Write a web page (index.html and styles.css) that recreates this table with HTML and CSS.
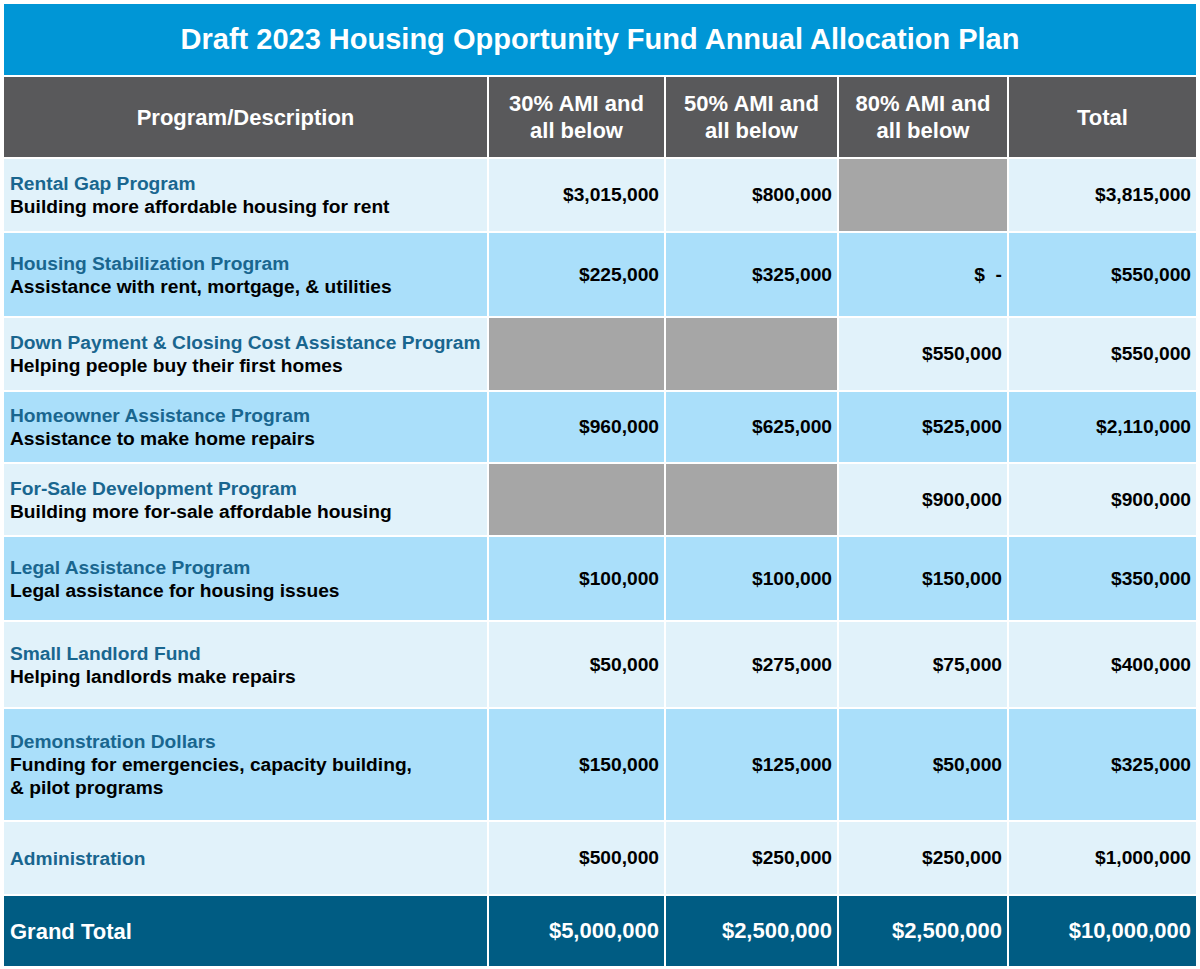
FILE: index.html
```html
<!DOCTYPE html>
<html lang="en">
<head>
    <meta charset="UTF-8">
    <meta name="viewport" content="width=device-width, initial-scale=1.0">
    <title>Draft 2023 Housing Opportunity Fund Annual Allocation Plan</title>
    <link rel="stylesheet" href="styles.css">
</head>
<body>
    <div class="plan">
        <div class="plan-title">Draft 2023 Housing Opportunity Fund Annual Allocation Plan</div>

        <div class="head head-left">Program/Description</div>
        <div class="head">30% AMI and<br>all below</div>
        <div class="head">50% AMI and<br>all below</div>
        <div class="head">80% AMI and<br>all below</div>
        <div class="head">Total</div>

        <!-- rental gap -->
        <div class="prog light"><span class="prog-name">Rental Gap Program</span><span>Building more affordable housing for rent</span></div>
        <div class="amt light">$3,015,000</div>
        <div class="amt light">$800,000</div>
        <div class="amt blank"></div>
        <div class="amt light">$3,815,000</div>

        <!-- housing stabilization -->
        <div class="prog dark"><span class="prog-name">Housing Stabilization Program</span><span>Assistance with rent, mortgage, &amp; utilities</span></div>
        <div class="amt dark">$225,000</div>
        <div class="amt dark">$325,000</div>
        <div class="amt dark">$&nbsp;&nbsp;-</div>
        <div class="amt dark">$550,000</div>

        <!-- down payment -->
        <div class="prog light"><span class="prog-name">Down Payment &amp; Closing Cost Assistance Program</span><span>Helping people buy their first homes</span></div>
        <div class="amt blank"></div>
        <div class="amt blank"></div>
        <div class="amt light">$550,000</div>
        <div class="amt light">$550,000</div>

        <!-- homeowner -->
        <div class="prog dark"><span class="prog-name">Homeowner Assistance Program</span><span>Assistance to make home repairs</span></div>
        <div class="amt dark">$960,000</div>
        <div class="amt dark">$625,000</div>
        <div class="amt dark">$525,000</div>
        <div class="amt dark">$2,110,000</div>

        <!-- for-sale -->
        <div class="prog light"><span class="prog-name">For-Sale Development Program</span><span>Building more for-sale affordable housing</span></div>
        <div class="amt blank"></div>
        <div class="amt blank"></div>
        <div class="amt light">$900,000</div>
        <div class="amt light">$900,000</div>

        <!-- legal -->
        <div class="prog dark"><span class="prog-name">Legal Assistance Program</span><span>Legal assistance for housing issues</span></div>
        <div class="amt dark">$100,000</div>
        <div class="amt dark">$100,000</div>
        <div class="amt dark">$150,000</div>
        <div class="amt dark">$350,000</div>

        <!-- small landlord -->
        <div class="prog light"><span class="prog-name">Small Landlord Fund</span><span>Helping landlords make repairs</span></div>
        <div class="amt light">$50,000</div>
        <div class="amt light">$275,000</div>
        <div class="amt light">$75,000</div>
        <div class="amt light">$400,000</div>

        <!-- demonstration -->
        <div class="prog dark"><span class="prog-name">Demonstration Dollars</span><span>Funding for emergencies, capacity building,<br>&amp; pilot programs</span></div>
        <div class="amt dark">$150,000</div>
        <div class="amt dark">$125,000</div>
        <div class="amt dark">$50,000</div>
        <div class="amt dark">$325,000</div>

        <!-- admin -->
        <div class="prog light"><span class="prog-name">Administration</span></div>
        <div class="amt light">$500,000</div>
        <div class="amt light">$250,000</div>
        <div class="amt light">$250,000</div>
        <div class="amt light">$1,000,000</div>

        <!-- grand total -->
        <div class="prog grand">Grand Total</div>
        <div class="amt grand">$5,000,000</div>
        <div class="amt grand">$2,500,000</div>
        <div class="amt grand">$2,500,000</div>
        <div class="amt grand">$10,000,000</div>
    </div>
</body>
</html>
```

FILE: styles.css
```css
body {
    margin: 0;
    padding: 0;
    background-color: #ffffff;
    font-family: 'Liberation Sans', Arial, sans-serif;
    font-weight: bold;
}

.plan {
    display: grid;
    grid-template-columns: 483px 175px 171px 168px 187px;
    grid-template-rows: 71px 80px 72px 83px 72px 70px 71px 83px 85px 111px 72px 70px;
    gap: 2px;
    padding: 4px;
    background-color: #ffffff;
}

.plan-title {
    grid-column: 1 / -1;
    background-color: #0096d6;
    color: #ffffff;
    font-size: 29px;
    display: flex;
    align-items: center;
    justify-content: center;
}

.head {
    background-color: #59595b;
    color: #ffffff;
    font-size: 22px;
    line-height: 27px;
    text-align: center;
    display: flex;
    align-items: center;
    justify-content: center;
}

.prog {
    display: flex;
    flex-direction: column;
    justify-content: center;
    padding: 0 0 0 6px;
    font-size: 19.2px;
    line-height: 23px;
    color: #000000;
    white-space: nowrap;
}

.prog-name {
    color: #19668f;
}

.amt {
    display: flex;
    align-items: center;
    justify-content: flex-end;
    padding: 0 5px;
    font-size: 19.2px;
    color: #000000;
}

.light {
    background-color: #e1f2fa;
}

.dark {
    background-color: #aadffa;
}

.blank {
    background-color: #a6a6a6;
}

.grand {
    background-color: #005c83;
    color: #ffffff;
    font-size: 22px;
}
```
